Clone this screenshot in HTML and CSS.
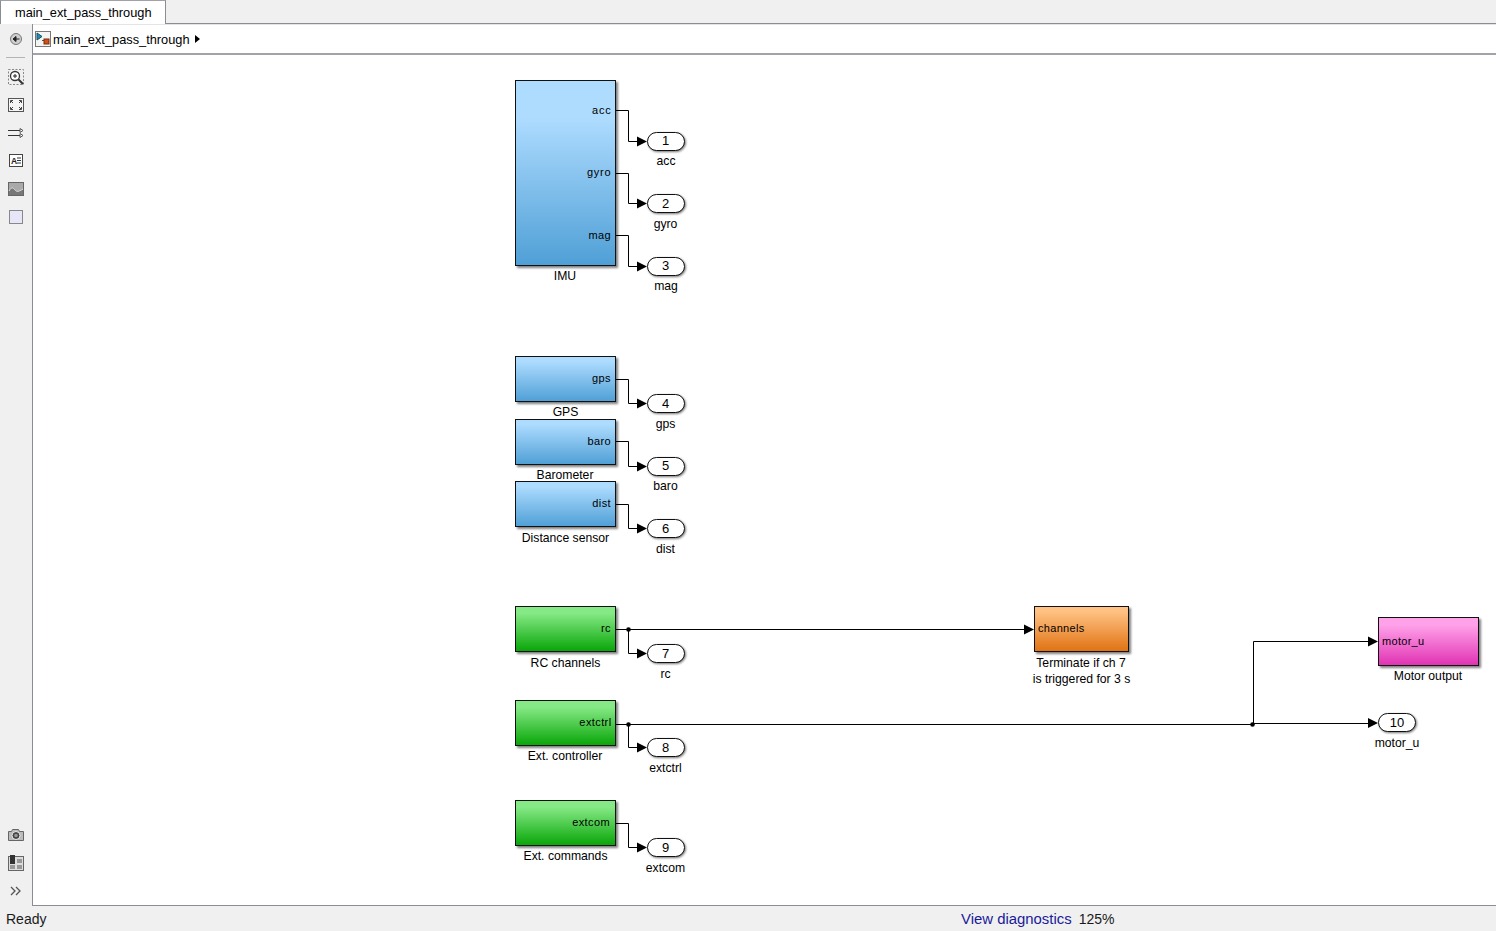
FILE: index.html
```html
<!DOCTYPE html>
<html lang="en">
<head>
<meta charset="utf-8">
<title>main_ext_pass_through</title>
<link rel="stylesheet" href="styles.css">
</head>
<body>
<div class="app">
  <div class="tabstrip"><div class="tab">main_ext_pass_through</div></div>
  <div class="workspace">
    <aside class="sidebar">
      <div class="tools">
        <svg class="tool" viewBox="0 0 18 18"><circle cx="9" cy="9" r="5.5" fill="#cfcfcf" stroke="#777"/><path d="M12.5 9H7M9 6.500 6 9l3 2.500z" fill="#222" stroke="#222" stroke-width="1"/></svg>
        <div class="sep"></div>
        <svg class="tool" viewBox="0 0 18 18"><rect x="1.500" y="1.500" width="15" height="15" fill="none" stroke="#888" stroke-dasharray="2 1.500"/><circle cx="8" cy="8" r="4.500" fill="#fff" stroke="#333" stroke-width="1.300"/><path d="M6 8h4M8 6v4" stroke="#222"/><path d="m11.500 11.500 4.500 4.500" stroke="#333" stroke-width="2"/></svg>
        <svg class="tool" viewBox="0 0 18 18"><rect x="1.500" y="2.500" width="15" height="13" fill="#f4f4f4" stroke="#555"/><path d="M3.500 7V4.500H6M14.500 7V4.500H12M3.500 11v2.500H6M14.500 11v2.500H12M4 5l2 2M14 5l-2 2M4 13l2-2M14 13l-2-2" fill="none" stroke="#444"/></svg>
        <svg class="tool" viewBox="0 0 18 18"><path d="M1 6.500h12M1 11.500h12" stroke="#333"/><path d="M13 4.500l3 2-3 2zM13 9.500l3 2-3 2z" fill="#fff" stroke="#555"/></svg>
        <svg class="tool" viewBox="0 0 18 18"><rect x="2.500" y="2.500" width="13" height="12" fill="#fff" stroke="#444"/><text x="4" y="12" class="icon-a">A</text><path d="M10 6h4M10 8.500h4M10 11h4" stroke="#333"/></svg>
        <svg class="tool" viewBox="0 0 18 18"><rect x="1.500" y="2.500" width="15" height="13" fill="#a9a9a9" stroke="#666"/><path d="M2 11c3-5 4-3 6-1s3 2 8-1v6H2z" fill="#777"/><path d="M2 11c3-5 4-3 6-1s3 2 8-1" fill="none" stroke="#ddd"/></svg>
        <svg class="tool" viewBox="0 0 18 18"><rect x="2.500" y="2.500" width="13" height="13" fill="#e6e6f8" stroke="#888"/></svg>
      </div>
      <div class="tools">
        <svg class="tool" viewBox="0 0 18 18"><path d="M1.500 5.500h3l1-2h6l1 2h4v9h-15z" fill="#bbb" stroke="#666"/><circle cx="9" cy="9.500" r="4" fill="#444" stroke="#eee"/><circle cx="9" cy="9.500" r="1.800" fill="#999"/></svg>
        <svg class="tool" viewBox="0 0 18 18"><rect x="1.500" y="2.500" width="15" height="14" fill="#ddd" stroke="#666"/><rect x="3" y="1" width="5" height="9" fill="#333"/><path d="M3 11h5v4H3zM10 5h5v4h-5zM10 11h5v4h-5z" fill="#999"/></svg>
        <svg class="tool" viewBox="0 0 18 18"><path d="m4 5 4 4-4 4M9 5l4 4-4 4" fill="none" stroke="#555" stroke-width="1.300"/></svg>
      </div>
    </aside>
    <main class="editor">
      <div class="breadcrumb">
        <svg class="model-icon" viewBox="0 0 16 16"><rect x="0.500" y="0.500" width="15" height="15" fill="#f4f4f4" stroke="#777"/><path d="M2 2v7l5-3.500z" fill="#2b8ac0" stroke="#155"/><path d="M7 9.500h2" stroke="#555"/><rect x="9" y="8" width="5" height="5" fill="#d2521c" stroke="#7a2a08"/></svg>
        <span class="crumb">main_ext_pass_through</span>
        <span class="crumb-arrow"></span>
      </div>
      <svg class="diagram" viewBox="33 55 1463 850" preserveAspectRatio="xMinYMin meet">
        <defs>
          <linearGradient id="blue-tall" x1="0" y1="0" x2="0" y2="1"><stop offset="0.2" stop-color="#aedcff"/><stop offset="1" stop-color="#4f9fd6"/></linearGradient>
          <linearGradient id="blue" x1="0" y1="0" x2="0" y2="1"><stop offset="0.1" stop-color="#aedcff"/><stop offset="1" stop-color="#4f9fd6"/></linearGradient>
          <linearGradient id="green" x1="0" y1="0" x2="0" y2="1"><stop offset="0.15" stop-color="#85e985"/><stop offset="1" stop-color="#08a508"/></linearGradient>
          <linearGradient id="orange" x1="0" y1="0" x2="0" y2="1"><stop offset="0.1" stop-color="#ffc284"/><stop offset="1" stop-color="#e07212"/></linearGradient>
          <linearGradient id="magenta" x1="0" y1="0" x2="0" y2="1"><stop offset="0.15" stop-color="#ffa2ea"/><stop offset="1" stop-color="#e032b2"/></linearGradient>
        </defs>

        <g class="wires">
          <path d="M616 110.500h12.500v31H638"/>
          <path d="M616 173.500h12.500v30H638"/>
          <path d="M616 235.500h12.500v31H638"/>
          <path d="M616 379.500h12.500v24H638"/>
          <path d="M616 441.500h12.500v25H638"/>
          <path d="M616 504.500h12.500v24H638"/>
          <path d="M616 629.500H1025M628.500 629.500v24H638"/>
          <path d="M616 724.500H1253.500M628.500 724.500v23H638"/>
          <path d="M616 823.500h12.500v24H638"/>
          <path d="M1253.500 724.500V641.500H1369M1253.500 723.500H1369"/>
        </g>
        <g class="heads">
          <path d="M637 136.500l10 5-10 5z"/>
          <path d="M637 198.500l10 5-10 5z"/>
          <path d="M637 261.500l10 5-10 5z"/>
          <path d="M637 398.500l10 5-10 5z"/>
          <path d="M637 461.500l10 5-10 5z"/>
          <path d="M637 523.500l10 5-10 5z"/>
          <path d="M637 648.500l10 5-10 5z"/>
          <path d="M637 742.500l10 5-10 5z"/>
          <path d="M637 842.500l10 5-10 5z"/>
          <path d="M1024 624.500l10 5-10 5z"/>
          <path d="M1368 636.500l10 5-10 5z"/>
          <path d="M1368 718l10 5-10 5z"/>
          <circle cx="628.500" cy="629.500" r="2.300"/>
          <circle cx="628.500" cy="724.500" r="2.300"/>
          <circle cx="1252.500" cy="724.500" r="2.300"/>
        </g>

        <g class="blocks">
          <rect class="block" x="515.500" y="80.500" width="100" height="185" fill="url(#blue-tall)"/>
          <rect class="block" x="515.500" y="356.500" width="100" height="45" fill="url(#blue)"/>
          <rect class="block" x="515.500" y="419.500" width="100" height="45" fill="url(#blue)"/>
          <rect class="block" x="515.500" y="481.500" width="100" height="45" fill="url(#blue)"/>
          <rect class="block" x="515.500" y="606.500" width="100" height="45" fill="url(#green)"/>
          <rect class="block" x="515.500" y="700.500" width="100" height="45" fill="url(#green)"/>
          <rect class="block" x="515.500" y="800.500" width="100" height="45" fill="url(#green)"/>
          <rect class="block" x="1034.500" y="606.500" width="94" height="45" fill="url(#orange)"/>
          <rect class="block" x="1378.500" y="617.500" width="100" height="48" fill="url(#magenta)"/>
        </g>

        <g class="ports">
          <rect class="pill" x="647.500" y="132.500" width="37" height="18" rx="9"/>
          <rect class="pill" x="647.500" y="194.500" width="37" height="18" rx="9"/>
          <rect class="pill" x="647.500" y="257.500" width="37" height="18" rx="9"/>
          <rect class="pill" x="647.500" y="394.500" width="37" height="18" rx="9"/>
          <rect class="pill" x="647.500" y="457.500" width="37" height="18" rx="9"/>
          <rect class="pill" x="647.500" y="519.500" width="37" height="18" rx="9"/>
          <rect class="pill" x="647.500" y="644.500" width="37" height="18" rx="9"/>
          <rect class="pill" x="647.500" y="738.500" width="37" height="18" rx="9"/>
          <rect class="pill" x="647.500" y="838.500" width="37" height="18" rx="9"/>
          <rect class="pill" x="1378.500" y="713.500" width="37" height="18" rx="9"/>
        </g>

        <g class="port-num">
          <text x="665.500" y="145">1</text>
          <text x="665.500" y="208">2</text>
          <text x="665.500" y="270">3</text>
          <text x="665.500" y="408">4</text>
          <text x="665.500" y="470">5</text>
          <text x="665.500" y="533">6</text>
          <text x="665.500" y="658">7</text>
          <text x="665.500" y="752">8</text>
          <text x="665.500" y="852">9</text>
          <text x="1397" y="727">10</text>
        </g>

        <g class="port-in-right">
          <text class="wide" x="611.500" y="114">acc</text>
          <text class="wide" x="611.500" y="176">gyro</text>
          <text x="611" y="239">mag</text>
          <text x="611" y="382">gps</text>
          <text x="611" y="445">baro</text>
          <text x="611" y="507">dist</text>
          <text x="611" y="632">rc</text>
          <text x="611.500" y="726">extctrl</text>
          <text x="610" y="826">extcom</text>
        </g>
        <g class="port-in-left">
          <text x="1038" y="632">channels</text>
          <text x="1382" y="645">motor_u</text>
        </g>

        <g class="label">
          <text x="565" y="280">IMU</text>
          <text x="565.500" y="416">GPS</text>
          <text x="565" y="479">Barometer</text>
          <text x="565.500" y="542">Distance sensor</text>
          <text x="565.500" y="667">RC channels</text>
          <text x="565" y="760">Ext. controller</text>
          <text x="565.500" y="860">Ext. commands</text>
          <text x="1081" y="667">Terminate if ch 7</text>
          <text x="1081.500" y="683">is triggered for 3 s</text>
          <text x="1428" y="680">Motor output</text>
          <text x="666" y="165">acc</text>
          <text x="665.500" y="228">gyro</text>
          <text x="666" y="290">mag</text>
          <text x="665.500" y="428">gps</text>
          <text x="665.500" y="490">baro</text>
          <text x="665.500" y="553">dist</text>
          <text x="665.500" y="678">rc</text>
          <text x="665.500" y="772">extctrl</text>
          <text x="665.500" y="872">extcom</text>
          <text x="1397" y="747">motor_u</text>
        </g>
      </svg>
    </main>
  </div>
  <footer class="status">
    <span class="ready">Ready</span>
    <span class="diag">View diagnostics</span>
    <span class="zoom">125%</span>
  </footer>
</div>
</body>
</html>
```

FILE: styles.css
```css
* { box-sizing: border-box; }

html, body {
  margin: 0;
  height: 100%;
  overflow: hidden;
}

body {
  background: #f0f0f0;
  font-family: "Liberation Sans", Arial, sans-serif;
  color: #000;
}

.app {
  display: flex;
  flex-direction: column;
  height: 931px;
}

.tabstrip {
  height: 24px;
  display: flex;
  flex: none;
  border-bottom: 1px solid #8c8c96;
}

.tab {
  width: 166px;
  height: 24px;
  padding: 4px 0 0 14px;
  background: #fff;
  border: 1px solid #8c8c96;
  border-top-color: #a0a0a8;
  border-bottom: none;
  font-size: 12.8px;
  line-height: 15px;
}

.workspace {
  flex: 1;
  display: flex;
  min-height: 0;
}

.sidebar {
  width: 33px;
  flex: none;
  display: flex;
  flex-direction: column;
  justify-content: space-between;
  align-items: center;
  padding: 6px 1px 6px 0;
  border-right: 1px solid #8c8c96;
}

.tools {
  display: flex;
  flex-direction: column;
  align-items: center;
  gap: 10px;
}

.tool {
  display: block;
  width: 18px;
  height: 18px;
}

.sep {
  width: 19px;
  height: 1px;
  background: #b4b4b8;
  margin: -1px 0 0;
}

.icon-a {
  font: bold 8.5px "Liberation Sans", sans-serif;
  fill: #222;
}

.editor {
  flex: 1;
  display: flex;
  flex-direction: column;
  min-width: 0;
  border-bottom: 1px solid #8c8c96;
}

.breadcrumb {
  height: 31px;
  flex: none;
  display: flex;
  align-items: center;
  padding: 0 0 0 2px;
  background: #fff;
  border-bottom: 2px solid #a2a2a8;
  border-top: 1px solid #e4e4e4;
}

.model-icon {
  width: 16px;
  height: 16px;
  flex: none;
}

.crumb {
  margin-left: 2px;
  font-size: 12.8px;
}

.crumb-arrow {
  width: 0;
  height: 0;
  margin: -1px 0 0 5px;
  border-left: 5px solid #000;
  border-top: 4.5px solid transparent;
  border-bottom: 4.5px solid transparent;
}

.diagram {
  display: block;
  flex: 1;
  width: 100%;
  min-height: 0;
  background: #fff;
}

.wires path {
  fill: none;
  stroke: #000;
  stroke-width: 1;
}

.heads path,
.heads circle {
  fill: #000;
}

.block {
  stroke: #111;
  stroke-width: 1;
  filter: drop-shadow(2px 2px 1px rgba(0, 0, 0, 0.5));
}

.pill {
  fill: #fff;
  stroke: #111;
  stroke-width: 1;
  filter: drop-shadow(1.5px 1.5px 0.8px rgba(0, 0, 0, 0.55));
}

.port-num text {
  font-size: 13px;
  text-anchor: middle;
}

.port-in-right text {
  font-size: 11px;
  letter-spacing: 0.4px;
  text-anchor: end;
}

.port-in-right .wide {
  letter-spacing: 0.8px;
}

.port-in-left text {
  font-size: 11px;
  letter-spacing: 0.3px;
}

.label text {
  font-size: 12.2px;
  text-anchor: middle;
}

.status {
  height: 25px;
  flex: none;
  display: flex;
  align-items: center;
  padding: 0 0 0 6px;
  font-size: 14px;
}

.ready {
  width: 955px;
  color: #1a1a1a;
}

.diag {
  color: #1a1a9a;
  font-size: 14.9px;
}

.zoom {
  margin-left: 7px;
  color: #1a1a1a;
}
```
